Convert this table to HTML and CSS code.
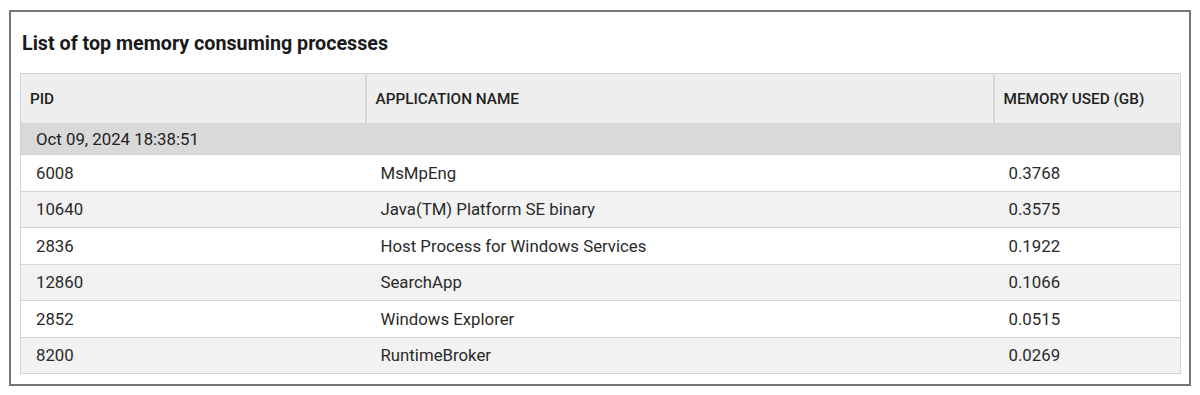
FILE: index.html
```html
<!DOCTYPE html>
<html>
<head>
<meta charset="utf-8">
<link rel="stylesheet" href="styles.css">
</head>
<body>
<div class="panel">
  <h2 class="title">List of top memory consuming processes</h2>
  <table class="grid">
    <colgroup>
      <col class="c-pid"><col class="c-app"><col class="c-mem">
    </colgroup>
    <thead>
      <tr><th>PID</th><th>APPLICATION NAME</th><th>MEMORY USED (GB)</th></tr>
    </thead>
    <tbody>
      <tr class="group"><td colspan="3">Oct 09, 2024 18:38:51</td></tr>
      <tr><td>6008</td><td>MsMpEng</td><td class="num">0.3768</td></tr>
      <tr class="alt"><td>10640</td><td>Java(TM) Platform SE binary</td><td class="num">0.3575</td></tr>
      <tr><td>2836</td><td>Host Process for Windows Services</td><td class="num">0.1922</td></tr>
      <tr class="alt"><td>12860</td><td>SearchApp</td><td class="num">0.1066</td></tr>
      <tr><td>2852</td><td>Windows Explorer</td><td class="num">0.0515</td></tr>
      <tr class="alt"><td>8200</td><td>RuntimeBroker</td><td class="num">0.0269</td></tr>
    </tbody>
  </table>
</div>
</body>
</html>
```

FILE: styles.css
```css
html, body {
  margin: 0;
  padding: 0;
  background: #ffffff;
}
body {
  font-family: Roboto, "Liberation Sans", Arial, sans-serif;
  color: #222;
}
.panel {
  margin: 10px 0 0 9px;
  border: 2px solid #777777;
  padding: 0 0 0 9px;
  box-sizing: border-box;
  width: 1182px;
  height: 376px;
}
.title {
  margin: 0;
  padding: 20px 0 17px 2px;
  font-size: 19.7px;
  font-weight: 700;
  color: #1a1a1a;
  line-height: 24px;
}
.grid {
  width: 1160px;
  border-collapse: collapse;
  table-layout: fixed;
  border: 1px solid #d4d4d4;
  font-size: 16.8px;
}
.c-pid { width: 345px; }
.c-app { width: 628px; }
.c-mem { width: 187px; }
.grid th {
  background: #eeeeee;
  height: 50px;
  padding: 0 0 0 9px;
  text-align: left;
  font-size: 15.3px;
  font-weight: 500;
  color: #222222;
  border-right: 2px solid #d8d8d8;
  border-bottom: 1px solid #d4d4d4;
  box-sizing: border-box;
}
.grid th:last-child { border-right: none; }
.grid td {
  height: 35.5px;
  padding: 0 0 0 15px;
  color: #2a2a2a;
  border-bottom: 1px solid #d4d4d4;
  background: #ffffff;
}
.grid tr.alt td { background: #f2f2f2; }
.grid tr.group td {
  background: #d9d9d9;
  height: 30px;
  color: #222;
}
```
